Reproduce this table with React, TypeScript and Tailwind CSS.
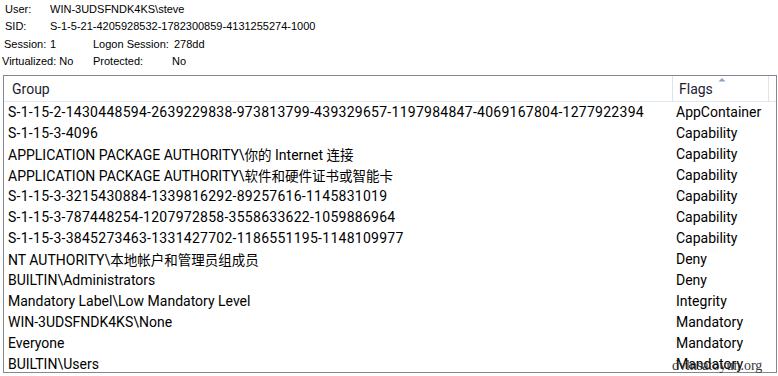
import React from "react";

type Row = { group: React.ReactNode; flag: string; sid?: boolean };

const Cjk = ({ children }: { children: React.ReactNode }) => (
  <span className="text-[13.5px] font-['Noto_Sans_CJK_SC',sans-serif]">{children}</span>
);

const rows: Row[] = [
  {
    group: "S-1-15-2-1430448594-2639229838-973813799-439329657-1197984847-4069167804-1277922394",
    flag: "AppContainer",
    sid: true,
  },
  { group: "S-1-15-3-4096", flag: "Capability", sid: true },
  {
    group: (
      <>
        APPLICATION PACKAGE AUTHORITY\<Cjk>你的</Cjk> Internet <Cjk>连接</Cjk>
      </>
    ),
    flag: "Capability",
  },
  {
    group: (
      <>
        APPLICATION PACKAGE AUTHORITY\<Cjk>软件和硬件证书或智能卡</Cjk>
      </>
    ),
    flag: "Capability",
  },
  { group: "S-1-15-3-3215430884-1339816292-89257616-1145831019", flag: "Capability", sid: true },
  { group: "S-1-15-3-787448254-1207972858-3558633622-1059886964", flag: "Capability", sid: true },
  { group: "S-1-15-3-3845273463-1331427702-1186551195-1148109977", flag: "Capability", sid: true },
  {
    group: (
      <>
        NT AUTHORITY\<Cjk>本地帐户和管理员组成员</Cjk>
      </>
    ),
    flag: "Deny",
  },
  { group: "BUILTIN\\Administrators", flag: "Deny" },
  { group: "Mandatory Label\\Low Mandatory Level", flag: "Integrity" },
  { group: "WIN-3UDSFNDK4KS\\None", flag: "Mandatory" },
  { group: "Everyone", flag: "Mandatory" },
  { group: "BUILTIN\\Users", flag: "Mandatory" },
];

function InfoLine({ children, h }: { children: React.ReactNode; h: string }) {
  return <div className={`flex items-center ${h}`}>{children}</div>;
}

export default function App() {
  return (
    <div className="relative w-[778px] h-[376px] overflow-hidden bg-white text-black">
      {/* token summary */}
      <div className="text-[11px] font-['Liberation_Sans',Arial,sans-serif]">
        <InfoLine h="h-[18px]">
          <span className="pl-[5px] w-[50px]">User:</span>
          <span>WIN-3UDSFNDK4KS\steve</span>
        </InfoLine>
        <InfoLine h="h-[17px]">
          <span className="pl-[5px] w-[50px]">SID:</span>
          <span>S-1-5-21-4205928532-1782300859-4131255274-1000</span>
        </InfoLine>
        <InfoLine h="h-[18px]">
          <span className="pl-[4px] w-[50px]">Session:</span>
          <span className="w-[43px]">1</span>
          <span className="w-[81px]">Logon Session:</span>
          <span>278dd</span>
        </InfoLine>
        <InfoLine h="h-[17px]">
          <span className="pl-[2px] w-[93px]">Virtualized: No</span>
          <span className="w-[79px]">Protected:</span>
          <span>No</span>
        </InfoLine>
      </div>

      {/* groups list */}
      <div className="mt-[5px] ml-[3px] w-[774px] h-[298px] border border-[#828790] overflow-hidden font-['Roboto',sans-serif] text-[14px]">
        <div className="flex h-[26px] border-b border-[#e3e8f0] text-[#1b2330]">
          <div className="w-[669px] pl-[8px] pt-[1px] flex items-center border-r border-[#dfe3ea]">Group</div>
          <div className="relative w-[96px] pl-[6px] pt-[1px] flex items-center border-r border-[#dfe3ea]">
            Flags
            <svg className="absolute left-[45px] top-[1px]" width="8" height="5" viewBox="0 0 8 5">
              <path d="M0.5 4.5 L4 1 L7.5 4.5 Z" fill="#8aa3c0" />
            </svg>
          </div>
        </div>
        {rows.map((r, i) => (
          <div key={i} className="flex h-[21px] items-center whitespace-nowrap">
            <div className={`w-[670px] pl-[4px] ${r.sid ? "tracking-[0.27px]" : ""}`}>{r.group}</div>
            <div className="pl-[2px]">{r.flag}</div>
          </div>
        ))}
      </div>

      <div className="absolute left-[672px] top-[355px] text-[14px] text-[#222] opacity-90 font-['Liberation_Serif',serif]">
        dvlnsatoyun.org
      </div>
    </div>
  );
}
